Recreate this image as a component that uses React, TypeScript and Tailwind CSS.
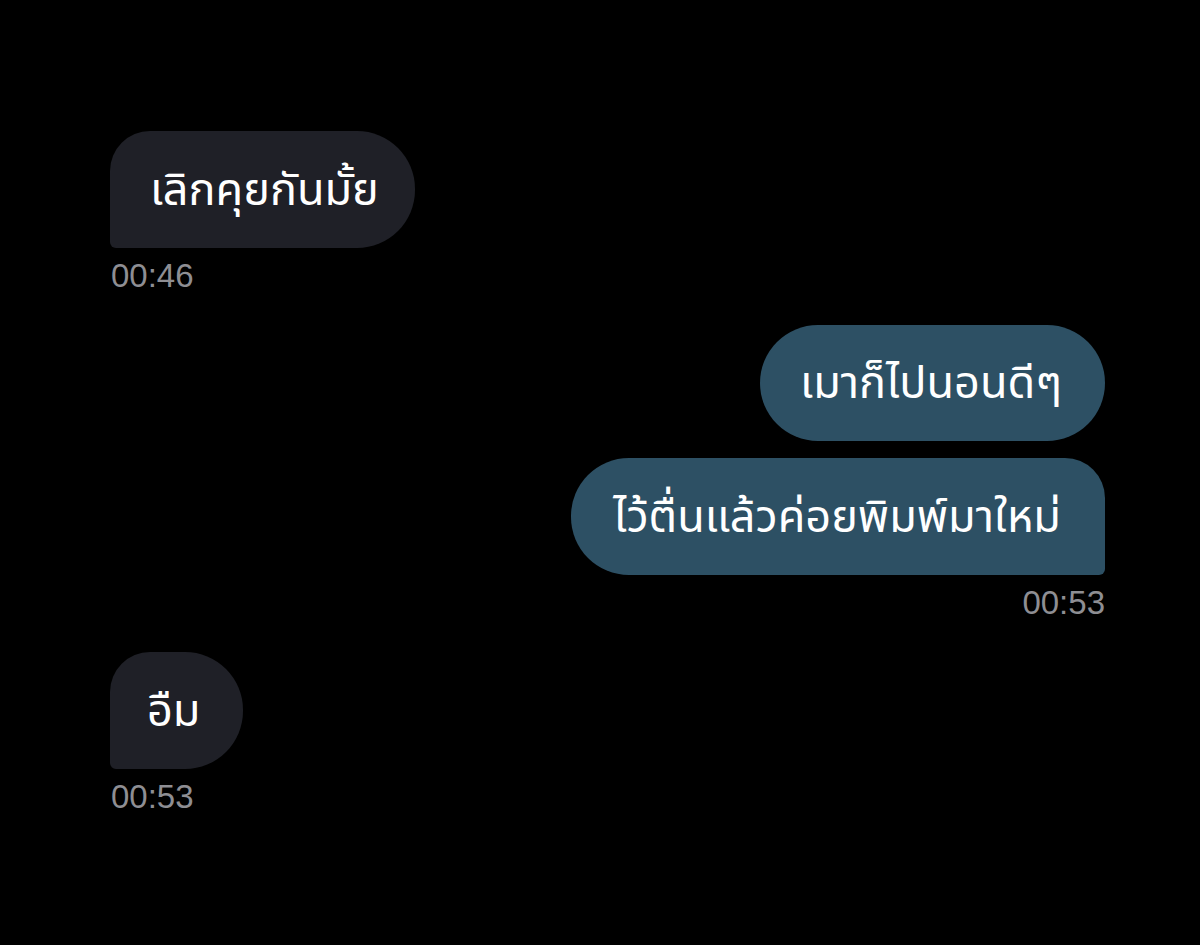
const font = { fontFamily: '"Noto Sans Thai", "Noto Sans", "Liberation Sans", sans-serif' };

const Time = ({ children, right }: { children: string; right?: boolean }) => (
  <div
    className={`mt-[12px] text-[33px] leading-[32px] text-[#8e8e93] ${right ? "text-right" : "pl-[1px]"}`}
    style={{ fontFamily: '"Liberation Sans", Arial, sans-serif' }}
  >
    {children}
  </div>
);

export default function App() {
  return (
    <div className="w-[1200px] h-[945px] bg-black overflow-hidden" style={font}>
      <div className="pl-[110px] pr-[95px] pt-[131px] flex flex-col">
        <div className="self-start">
          <div className="h-[117px] pl-[40px] pr-[36px] pt-[4px] flex items-center bg-[#1f2027] text-white text-[45px] rounded-tl-[40px] rounded-tr-[58px] rounded-br-[58px] rounded-bl-[6px]">
            เลิกคุยกันมั้ย
          </div>
          <Time>00:46</Time>
        </div>

        <div className="self-end mt-[33px] flex flex-col items-end">
          <div className="h-[116px] pl-[40px] pr-[43px] pt-[4px] flex items-center bg-[#2d5064] text-white text-[45px] rounded-[58px]">
            เมาก็ไปนอนดีๆ
          </div>
          <div className="mt-[17px] h-[117px] pl-[42px] pr-[44px] pt-[4px] flex items-center bg-[#2d5064] text-white text-[45px] rounded-tl-[58px] rounded-bl-[58px] rounded-tr-[40px] rounded-br-[6px]">
            ไว้ตื่นแล้วค่อยพิมพ์มาใหม่
          </div>
          <Time right>00:53</Time>
        </div>

        <div className="self-start mt-[33px]">
          <div className="h-[117px] pl-[37px] pr-[43px] pt-[4px] flex items-center bg-[#1f2027] text-white text-[45px] rounded-tl-[40px] rounded-tr-[58px] rounded-br-[58px] rounded-bl-[6px]">
            อืม
          </div>
          <Time>00:53</Time>
        </div>
      </div>
    </div>
  );
}
